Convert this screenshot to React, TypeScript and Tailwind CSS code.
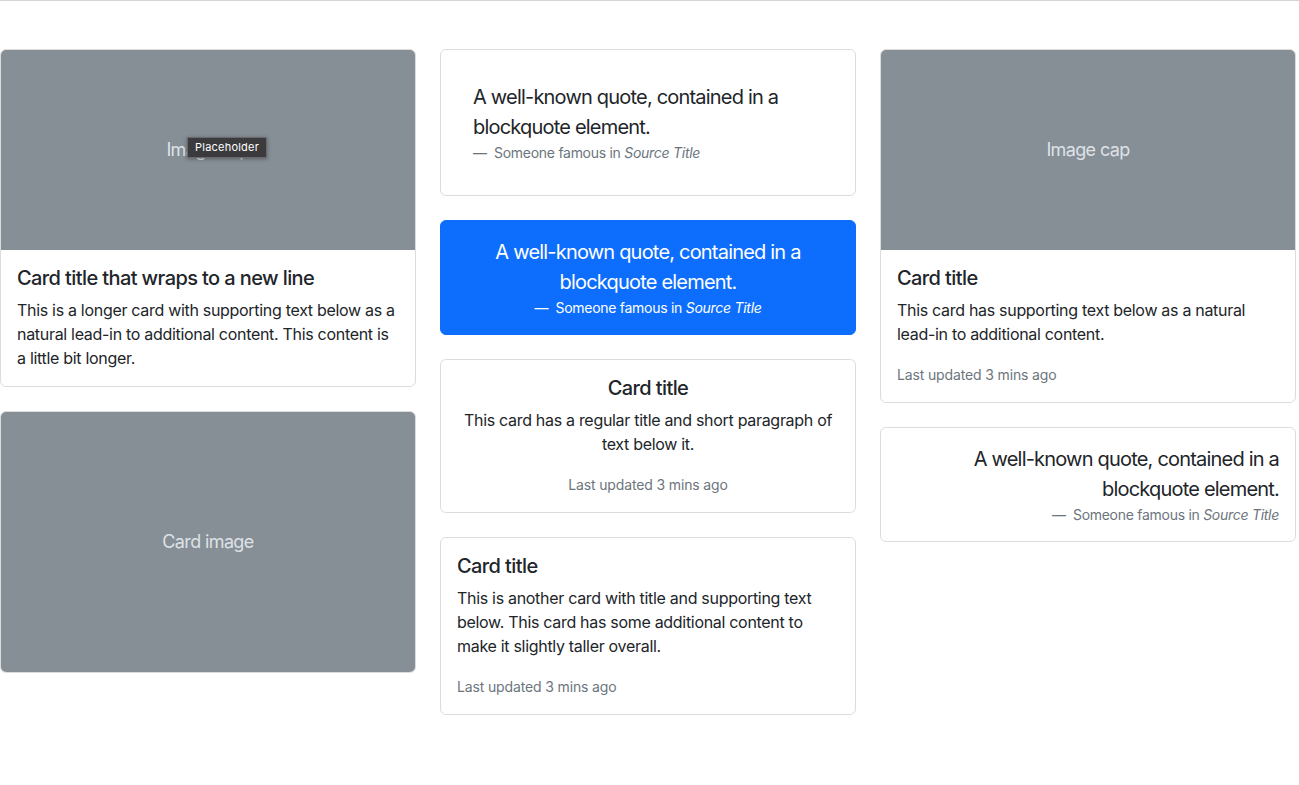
import React from "react";

const font = { fontFamily: 'Inter, "Helvetica Neue", Arial, sans-serif' };

function Placeholder({ h, label, tooltip }: { h: string; label: string; tooltip?: boolean }) {
  return (
    <div className={`relative ${h} w-full bg-[#868e96] rounded-t-[5px] flex items-center justify-center`}>
      <span className="text-[18px] text-[#dee2e6] leading-none tracking-[-0.035em]">{label}</span>
      {tooltip && (
        <div className="absolute left-[186px] top-[87px] h-[21px] px-[7px] flex items-center bg-[#3b3b3e] border border-[#6a6a6e] shadow-[0_1px_4px_rgba(0,0,0,0.35)] text-[11px] tracking-[0.02em] text-white leading-none">
          Placeholder
        </div>
      )}
    </div>
  );
}

function Card({ children, className = "" }: { children: React.ReactNode; className?: string }) {
  return (
    <div className={`w-[416px] border border-[#dcdcdd] rounded-[6px] bg-white ${className}`}>{children}</div>
  );
}

function Footer({ light = false }: { light?: boolean }) {
  return (
    <div className={`text-[14px] leading-[21px] tracking-[-0.02em] ${light ? "text-white" : "text-[#6c757d]"}`}>
      <span>—&nbsp; </span>Someone famous in <cite className="italic">Source Title</cite>
    </div>
  );
}

function Quote({ light = false }: { light?: boolean }) {
  return (
    <>
      <p className={`text-[20px] leading-[30px] tracking-[-0.04em] ${light ? "text-white" : "text-[#212529]"}`}>
        A well-known quote, contained in a blockquote element.
      </p>
      <Footer light={light} />
    </>
  );
}

function Title({ children }: { children: React.ReactNode }) {
  return <h5 className="text-[20px] leading-[24px] font-medium mb-2 tracking-[-0.03em]">{children}</h5>;
}

function Updated() {
  return (
    <p className="h-[24px]">
      <small className="text-[14px] text-[#6c757d] tracking-[-0.01em]">Last updated 3 mins ago</small>
    </p>
  );
}

export default function App() {
  return (
    <div style={font} className="min-h-[785px] bg-white border-t border-[#d4d4d4] text-[#212529] text-[16px] leading-[24px] tracking-[-0.019em]">
      <div className="flex gap-6 pt-12 items-start">
        {/* Column 1 */}
        <div className="flex flex-col gap-6">
          <Card>
            <Placeholder h="h-[200px]" label="Image cap" tooltip />
            <div className="p-4">
              <Title>Card title that wraps to a new line</Title>
              <p>
                This is a longer card with supporting text below as a natural lead-in to additional content. This content is a little bit longer.
              </p>
            </div>
          </Card>
          <Card>
            <div className="h-[260px] w-full bg-[#868e96] rounded-[5px] flex items-center justify-center">
              <span className="text-[18px] text-[#dee2e6] leading-none tracking-[-0.035em]">Card image</span>
            </div>
          </Card>
        </div>

        {/* Column 2 */}
        <div className="flex flex-col gap-6">
          <Card className="p-8">
            <Quote />
          </Card>
          <div className="w-[416px] rounded-[6px] bg-[#0d6efd] border border-[#0d6efd] p-4 text-center">
            <Quote light />
          </div>
          <Card className="p-4 text-center">
            <Title>Card title</Title>
            <p className="mb-4">This card has a regular title and short paragraph of text below it.</p>
            <Updated />
          </Card>
          <Card className="p-4">
            <Title>Card title</Title>
            <p className="mb-4">
              This is another card with title and supporting text below. This card has some additional content to make it slightly taller overall.
            </p>
            <Updated />
          </Card>
        </div>

        {/* Column 3 */}
        <div className="flex flex-col gap-6">
          <Card>
            <Placeholder h="h-[200px]" label="Image cap" />
            <div className="p-4">
              <Title>Card title</Title>
              <p className="mb-4">This card has supporting text below as a natural lead-in to additional content.</p>
              <Updated />
            </div>
          </Card>
          <Card className="p-4 text-right">
            <Quote />
          </Card>
        </div>
      </div>
    </div>
  );
}
